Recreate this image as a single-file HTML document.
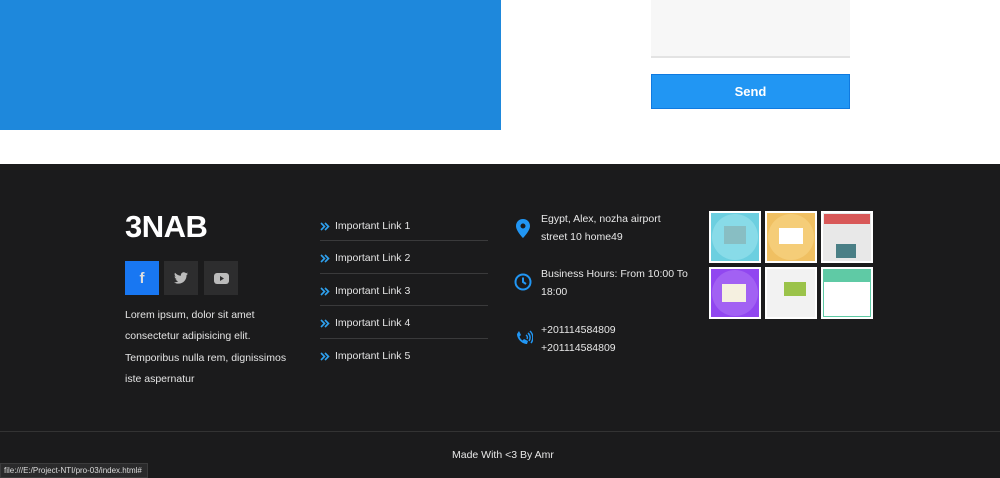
<!DOCTYPE html>
<html><head><meta charset="utf-8"><style>
*{margin:0;padding:0;box-sizing:border-box}
body{width:1000px;height:478px;overflow:hidden;background:#fff;font-family:"Liberation Sans",sans-serif;position:relative}
.abs{position:absolute}
.blue{left:0;top:0;width:501px;height:130px;background:#1e88dc}
.ta{left:651px;top:0;width:199px;height:58px;background:#f7f7f7;border-bottom:2px solid #e3e3e3}
.send{left:651px;top:74px;width:199px;height:35px;background:#2196f3;border:1px solid #0f7ae0;color:#fff;font-weight:bold;font-size:13px;text-align:center;line-height:33px}
.foot{left:0;top:164px;width:1000px;height:314px;background:#1b1b1c}
.t{color:#e8e8e8;font-size:11px}
.logo{left:125px;top:209px;font-size:31px;font-weight:bold;color:#fff;letter-spacing:-0.5px}
.sq{width:34px;height:34px;top:261px;background:#2d2d2e;display:flex;align-items:center;justify-content:center}
.lorem{left:125px;top:305px;width:170px;line-height:21.3px;font-size:10.5px;color:#e4e4e4}
.link{left:320px;width:168px;height:32.5px;border-bottom:1px solid #3a3a3b;font-size:10.5px;color:#e4e4e4;padding-left:15px;padding-top:12px;line-height:1}
.link svg{position:absolute;left:0;top:13px}
.info{left:541px;font-size:10.5px;color:#e8e8e8;line-height:18px}
.th{width:52px;height:52px;border:2px solid #fff}
.line{left:0;top:431px;width:1000px;height:1px;background:#333}
</style></head><body>
<div class="abs blue"></div>
<div class="abs ta"></div>
<div class="abs send">Send</div>
<div class="abs foot"></div>
<div class="abs logo">3NAB</div>
<div class="abs sq" style="left:125px;background:#1877f2;color:#ddd;font-weight:bold;font-size:15px">f</div>
<div class="abs sq" style="left:164px"><svg width="14" height="12" viewBox="0 0 24 20"><path fill="#bbb" d="M24 2.4c-.9.4-1.8.6-2.8.8 1-.6 1.8-1.6 2.2-2.7-1 .6-2 1-3.1 1.2C19.4.7 18.1.1 16.7.1c-2.7 0-4.9 2.200-4.9 4.9 0 .4 0 .8.1 1.100C7.800 5.900 4.200 4 1.700 1 1.300 1.700 1 2.600 1 3.500c0 1.700.9 3.200 2.200 4.100-.8 0-1.600-.2-2.200-.6v.1c0 2.400 1.700 4.400 3.900 4.800-.4.1-.8.2-1.300.2-.3 0-.6 0-.9-.1.6 2 2.400 3.400 4.600 3.400-1.700 1.300-3.800 2.100-6.100 2.100H0c2.200 1.400 4.800 2.200 7.500 2.200 9.100 0 14-7.500 14-14v-.6c1-.7 1.800-1.600 2.500-2.700z"/></svg></div>
<div class="abs sq" style="left:204px"><svg width="15" height="11" viewBox="0 0 15 11"><rect width="15" height="11" rx="3" fill="#bbb"/><path d="M6 3v5l4-2.5z" fill="#2d2d2e"/></svg></div>
<div class="abs lorem">Lorem ipsum, dolor sit amet consectetur adipisicing elit. Temporibus nulla rem, dignissimos iste aspernatur</div>
<div class="abs link" style="top:208.5px"><svg width="10" height="9" viewBox="0 0 10 9"><path d="M1 1l3.5 3.5L1 8M5 1l3.5 3.5L5 8" fill="none" stroke="#2fa2f0" stroke-width="1.6"/></svg>Important Link 1</div>
<div class="abs link" style="top:241px"><svg width="10" height="9" viewBox="0 0 10 9"><path d="M1 1l3.5 3.5L1 8M5 1l3.5 3.5L5 8" fill="none" stroke="#2fa2f0" stroke-width="1.6"/></svg>Important Link 2</div>
<div class="abs link" style="top:273.5px"><svg width="10" height="9" viewBox="0 0 10 9"><path d="M1 1l3.5 3.5L1 8M5 1l3.5 3.5L5 8" fill="none" stroke="#2fa2f0" stroke-width="1.6"/></svg>Important Link 3</div>
<div class="abs link" style="top:306px"><svg width="10" height="9" viewBox="0 0 10 9"><path d="M1 1l3.5 3.5L1 8M5 1l3.5 3.5L5 8" fill="none" stroke="#2fa2f0" stroke-width="1.6"/></svg>Important Link 4</div>
<div class="abs link" style="top:338.5px;border:none"><svg width="10" height="9" viewBox="0 0 10 9"><path d="M1 1l3.5 3.5L1 8M5 1l3.5 3.5L5 8" fill="none" stroke="#2fa2f0" stroke-width="1.6"/></svg>Important Link 5</div>
<svg class="abs" style="left:516px;top:219px" width="14" height="19" viewBox="0 0 14 19"><path fill="#2196f3" d="M7 0C3 0 0 3 0 7c0 5 7 12 7 12s7-7 7-12c0-4-3-7-7-7zm0 9.5a2.5 2.5 0 110-5 2.5 2.5 0 010 5z"/></svg>
<div class="abs info" style="top:210px">Egypt, Alex, nozha airport<br>street 10 home49</div>
<svg class="abs" style="left:514px;top:273px" width="18" height="18" viewBox="0 0 18 18"><circle cx="9" cy="9" r="7.5" fill="none" stroke="#2196f3" stroke-width="2"/><path d="M9 4.5V9l3 2" fill="none" stroke="#2196f3" stroke-width="2"/></svg>
<div class="abs info" style="top:265px">Business Hours: From 10:00 To<br>18:00</div>
<svg class="abs" style="left:515px;top:329px" width="18" height="18" viewBox="0 0 18 18"><path fill="#2196f3" d="M4 2l2 4-1.5 1.5c.5 1.5 1.5 3 3 4L9 10l4 2-1 3c-5 0-10-5-10-10z"/><path d="M11 6a3 3 0 011 4M13 4a6 6 0 011 8M15 2a9 9 0 011 12" fill="none" stroke="#2196f3" stroke-width="1.5"/></svg>
<div class="abs info" style="top:321px">+201114584809<br>+201114584809</div>
<div class="abs th" style="left:709px;top:211px;background:#6ccfe0"></div>
<div class="abs th" style="left:765px;top:211px;background:#f0c062"></div>
<div class="abs th" style="left:821px;top:211px;background:#e8e8e8"></div>
<div class="abs th" style="left:709px;top:267px;background:#9147f0"></div>
<div class="abs th" style="left:765px;top:267px;background:#f2f2f2"></div>
<div class="abs th" style="left:821px;top:267px;background:#5fcaa5"></div>
<div class="abs" style="left:712px;top:214px;width:46px;height:46px;border-radius:50%;background:#88dbe8"></div>
<div class="abs" style="left:724px;top:226px;width:22px;height:18px;background:#8aa;opacity:.6"></div>
<div class="abs" style="left:768px;top:214px;width:46px;height:46px;border-radius:50%;background:#f5cd78"></div>
<div class="abs" style="left:779px;top:228px;width:24px;height:16px;background:#fff"></div>
<div class="abs" style="left:712px;top:270px;width:46px;height:46px;border-radius:50%;background:#a261f3"></div>
<div class="abs" style="left:722px;top:284px;width:24px;height:18px;background:#f5f0e0"></div>
<div class="abs" style="left:824px;top:214px;width:46px;height:10px;background:#d85858"></div>
<div class="abs" style="left:836px;top:244px;width:20px;height:14px;background:#4a7f86"></div>
<div class="abs" style="left:784px;top:282px;width:22px;height:14px;background:#9bc34a"></div>
<div class="abs" style="left:824px;top:282px;width:46px;height:34px;background:#fff"></div>
<div class="abs line"></div>
<div class="abs t" style="left:452px;top:449px;font-size:10.5px">Made With &lt;3 By Amr</div>
<div class="abs" style="left:0;top:463px;width:148px;height:15px;background:#2a2a2b;border:1px solid #3b3b3c;color:#ddd;font-size:8px;line-height:13px;padding-left:3px">file:///E:/Project-NTI/pro-03/index.html#</div>
</body></html>
